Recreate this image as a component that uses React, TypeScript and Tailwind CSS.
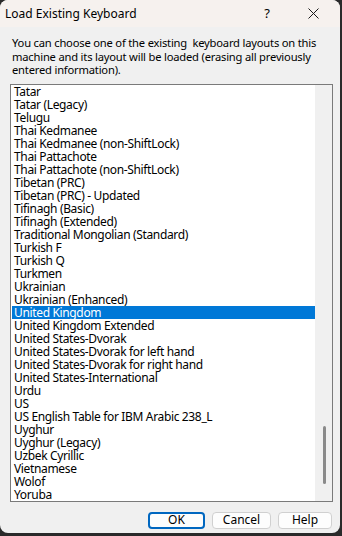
import React from "react";

const items = [
  "Tatar",
  "Tatar (Legacy)",
  "Telugu",
  "Thai Kedmanee",
  "Thai Kedmanee (non-ShiftLock)",
  "Thai Pattachote",
  "Thai Pattachote (non-ShiftLock)",
  "Tibetan (PRC)",
  "Tibetan (PRC) - Updated",
  "Tifinagh (Basic)",
  "Tifinagh (Extended)",
  "Traditional Mongolian (Standard)",
  "Turkish F",
  "Turkish Q",
  "Turkmen",
  "Ukrainian",
  "Ukrainian (Enhanced)",
  "United Kingdom",
  "United Kingdom Extended",
  "United States-Dvorak",
  "United States-Dvorak for left hand",
  "United States-Dvorak for right hand",
  "United States-International",
  "Urdu",
  "US",
  "US English Table for IBM Arabic 238_L",
  "Uyghur",
  "Uyghur (Legacy)",
  "Uzbek Cyrillic",
  "Vietnamese",
  "Wolof",
  "Yoruba",
];

export default function App() {
  return (
    <div
      className="w-[342px] h-[536px] bg-[#2a2a2a] overflow-hidden"
      style={{ fontFamily: '"Noto Sans", sans-serif' }}
    >
      <div className="w-[340px] h-[533px] rounded-[8px] bg-[#f0f0f0] overflow-hidden flex flex-col text-[12px] text-black">
        {/* Title bar */}
        <div className="h-[27px] bg-[#f6f1ee] flex items-center shrink-0">
          <div className="pl-[5px] flex-1 leading-none">Load Existing Keyboard</div>
          <div className="w-[46px] flex justify-center text-[13px] leading-none">?</div>
          <div className="w-[46px] flex justify-center mr-[4px]">
            <svg width="11" height="11" viewBox="0 0 11 11">
              <path d="M0.5 0.5 L10.5 10.5 M10.5 0.5 L0.5 10.5" stroke="#1a1a1a" strokeWidth="1" />
            </svg>
          </div>
        </div>
        {/* Description */}
        <div className="pl-[12px] pt-[9px] leading-[13.5px] text-[11.2px] tracking-[-0.2px] whitespace-nowrap flex flex-col">
          <span>You can choose one of the existing&nbsp; keyboard layouts on this</span>
          <span>machine and its layout will be loaded (erasing all previously</span>
          <span>entered information).</span>
        </div>
        {/* List box */}
        <div className="ml-[10px] mt-[7px] w-[323px] h-[418px] border border-[#7a7a7a] bg-white flex">
          <div className="flex-1 flex flex-col pl-[1px]">
            {items.map((it) => (
              <div
                key={it}
                className={
                  "h-[13px] leading-[13px] pl-[2px] whitespace-nowrap tracking-[-0.35px] " +
                  (it === "United Kingdom" ? "bg-[#0078d7] text-white" : "")
                }
              >
                {it}
              </div>
            ))}
          </div>
          <div className="w-[17px] bg-[#f0f0f0] flex justify-center">
            <div className="w-[3px] h-[58px] mt-[341px] rounded-full bg-[#8a8a8a] ml-[2px]" />
          </div>
        </div>
        {/* Buttons */}
        <div className="flex justify-end gap-[7px] pr-[8px] mt-[10px]">
          <button className="w-[57px] h-[17px] rounded-[4px] border-2 border-[#0067c0] bg-[#fdfdfd] text-[12px] leading-none flex items-center justify-center">
            OK
          </button>
          <button className="w-[59px] h-[17px] rounded-[4px] border border-[#d0d0d0] bg-[#fdfdfd] text-[12px] leading-none flex items-center justify-center">
            Cancel
          </button>
          <button className="w-[54px] h-[17px] rounded-[4px] border border-[#d0d0d0] bg-[#fdfdfd] text-[12px] leading-none flex items-center justify-center">
            Help
          </button>
        </div>
      </div>
    </div>
  );
}
